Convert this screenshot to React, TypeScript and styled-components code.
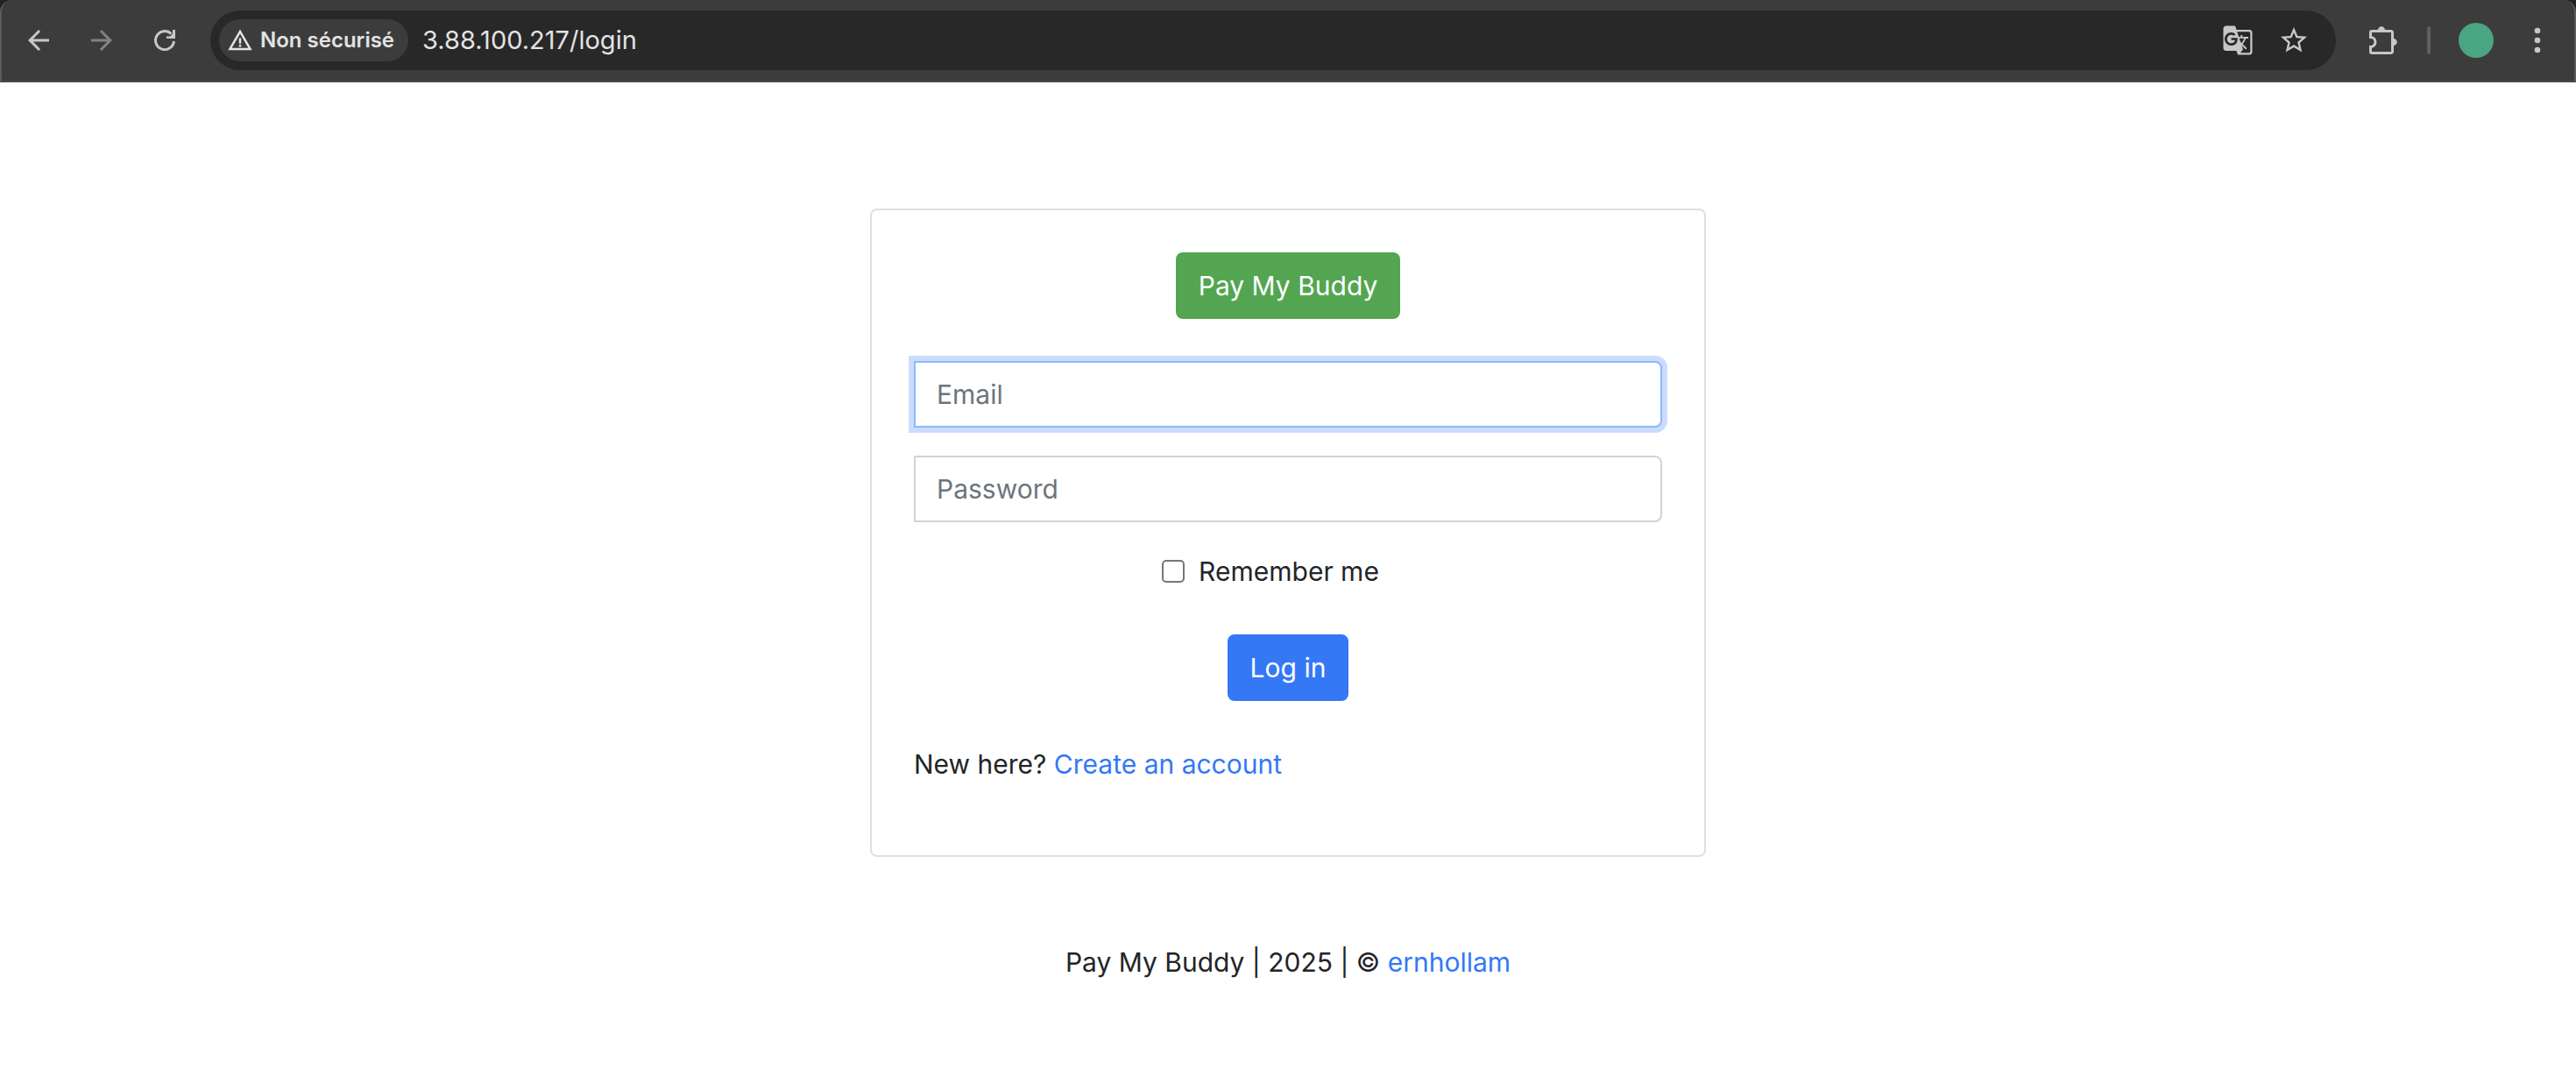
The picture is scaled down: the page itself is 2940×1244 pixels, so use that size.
import React, { useState } from "react";
import styled, { createGlobalStyle } from "styled-components";
import { MdArrowBack, MdArrowForward, MdGTranslate, MdStarBorder, MdWarningAmber } from "react-icons/md";

const GlobalStyle = createGlobalStyle`
  *, *::before, *::after { box-sizing: border-box; }
  body {
    margin: 0;
    background: #fff;
    color: #212529;
    font-family: Inter, "Liberation Sans", sans-serif;
    font-size: 30px;
    line-height: 48px;
  }
  button, input { font: inherit; }
`;

const BarFrame = styled.header`
  background: #222;
`;

const Toolbar = styled.div`
  display: flex;
  align-items: center;
  height: 94px;
  padding: 0 24px;
  background: #3c3c3c;
  border: 2px solid #5c5c5c;
  border-top: 0;
  border-bottom-color: #474747;
  border-radius: 14px 14px 0 0;
`;

const IconButton = styled.button<{ $dim?: boolean }>`
  display: flex;
  align-items: center;
  justify-content: center;
  flex: none;
  width: 36px;
  height: 40px;
  padding: 0;
  border: 0;
  background: none;
  color: ${(p) => (p.$dim ? "#828282" : "#c7c7c7")};
  cursor: pointer;
`;

const NavGroup = styled.nav`
  display: flex;
  gap: 36px;
`;

const AddressBar = styled.div`
  display: flex;
  align-items: center;
  flex: 1;
  height: 68px;
  margin: 0 36px 0 34px;
  padding: 0 30px 0 10px;
  border-radius: 34px;
  background: #282828;
`;

const SecurityChip = styled.button`
  display: flex;
  align-items: center;
  gap: 8px;
  height: 48px;
  padding: 0 16px 0 9px;
  border: 0;
  border-radius: 24px;
  background: #3c3c3c;
  color: #e3e3e3;
  font-size: 24px;
  font-weight: 600;
  white-space: nowrap;
`;

const UrlInput = styled.input`
  flex: 1;
  min-width: 0;
  margin-left: 16px;
  padding: 0;
  border: 0;
  outline: 0;
  background: none;
  color: #e3e3e3;
  font-size: 29px;
`;

const BarActions = styled.div`
  display: flex;
  gap: 28px;
`;

const Tools = styled.div`
  display: flex;
  align-items: center;
  gap: 32px;
`;

const Divider = styled.span`
  width: 4px;
  height: 32px;
  border-radius: 2px;
  background: #5f5f5f;
`;

const Avatar = styled.button`
  width: 40px;
  height: 40px;
  padding: 0;
  border: 0;
  border-radius: 50%;
  background: #4aa582;
`;

const Page = styled.div`
  display: flex;
  flex-direction: column;
  align-items: center;
  gap: 96px;
  padding: 144px 24px 96px;
`;

const Card = styled.main`
  width: 100%;
  max-width: 954px;
  padding: 48px;
  border: 2px solid #dfdfdf;
  border-radius: 8px;
`;

const Form = styled.form`
  display: flex;
  flex-direction: column;
  align-items: center;
  gap: 32px;
`;

const Button = styled.button<{ $color: string }>`
  height: 76px;
  margin: 0;
  padding: 0 26px;
  border: 0;
  border-radius: 8px;
  background: ${(p) => p.$color};
  color: #fff;
  cursor: pointer;
`;

const Brand = styled.div`
  display: flex;
  justify-content: center;
  margin-bottom: 48px;
`;

const Field = styled.input<{ $active: boolean }>`
  width: 100%;
  height: 76px;
  padding: 0 24px;
  border: 2px solid ${(p) => (p.$active ? "#8bb9fb" : "#ced4da")};
  border-radius: 0 8px 8px 0;
  outline: 0;
  background: #fff;
  color: #495057;
  box-shadow: ${(p) => (p.$active ? "0 0 0 6px #cbdcfd" : "none")};

  &::placeholder { color: #6c757d; opacity: 1; }
`;

const Remember = styled.div`
  display: flex;
  align-items: center;
  gap: 16px;
  padding-right: 40px;
`;

const Checkbox = styled.input`
  appearance: none;
  width: 26px;
  height: 26px;
  margin: 0;
  border: 2px solid #767676;
  border-radius: 5px;
  background: #fff;

  &:checked { background: #3478f6; border-color: #3478f6; }
`;

const Submit = styled.div`
  padding: 16px 0;
`;

const SignUp = styled.p`
  margin: 32px 0;
`;

const Link = styled.a`
  color: #3478f6;
  text-decoration: none;
`;

const ReloadIcon = () => (
  <svg width="24" height="24" viewBox="0 0 24 24" fill="none" aria-hidden="true">
    <path d="M22.5 13A10.5 10.5 0 1 1 19.4 4.6" stroke="currentColor" strokeWidth="3" />
    <path d="M24 0v10H14V7.4h4L21 4.4V0z" fill="currentColor" />
  </svg>
);

const PuzzleIcon = () => (
  <svg width="32" height="32" viewBox="0 0 32 32" aria-hidden="true">
    <path
      d="M3 5.5H25a1.5 1.5 0 0 1 1.5 1.5V29a1.5 1.5 0 0 1-1.5 1.5H3A1.5 1.5 0 0 1 1.5 29V23.5a5.5 5.5 0 0 0 0-11V7A1.5 1.5 0 0 1 3 5.5z"
      fill="none"
      stroke="currentColor"
      strokeWidth="3"
    />
    <path d="M10 5a4 4.5 0 0 1 8 0zM27 14a4.5 4 0 0 1 0 8z" fill="currentColor" stroke="currentColor" strokeWidth="0.5" />
  </svg>
);

const DotsIcon = () => (
  <svg width="8" height="32" viewBox="0 0 8 32" fill="currentColor" aria-hidden="true">
    <circle cx="4" cy="5" r="3.3" />
    <circle cx="4" cy="16" r="3.3" />
    <circle cx="4" cy="27" r="3.3" />
  </svg>
);

function BrowserBar() {
  return (
    <BarFrame>
      <Toolbar>
        <NavGroup aria-label="Navigation">
          <IconButton aria-label="Back"><MdArrowBack size={36} /></IconButton>
          <IconButton aria-label="Forward" $dim><MdArrowForward size={36} /></IconButton>
          <IconButton aria-label="Reload"><ReloadIcon /></IconButton>
        </NavGroup>
        <AddressBar>
          <SecurityChip>
            <MdWarningAmber size={30} />
            Non sécurisé
          </SecurityChip>
          <UrlInput aria-label="Address" defaultValue="3.88.100.217/login" />
          <BarActions>
            <IconButton aria-label="Translate"><MdGTranslate size={36} /></IconButton>
            <IconButton aria-label="Bookmark"><MdStarBorder size={38} /></IconButton>
          </BarActions>
        </AddressBar>
        <Tools>
          <IconButton aria-label="Extensions"><PuzzleIcon /></IconButton>
          <Divider />
          <Avatar aria-label="Profile" />
          <IconButton aria-label="Menu"><DotsIcon /></IconButton>
        </Tools>
      </Toolbar>
    </BarFrame>
  );
}

export default function App() {
  const [active, setActive] = useState("email");
  const fields = [
    { id: "email", label: "Email", type: "email" },
    { id: "password", label: "Password", type: "password" },
  ];

  return (
    <>
      <GlobalStyle />
      <BrowserBar />
      <Page>
        <Card>
          <Brand>
            <Button type="button" $color="#53a551">Pay My Buddy</Button>
          </Brand>
          <Form onSubmit={(e) => e.preventDefault()}>
            {fields.map((f) => (
              <Field
                key={f.id}
                id={f.id}
                type={f.type}
                aria-label={f.label}
                placeholder={f.label}
                $active={active === f.id}
                onFocus={() => setActive(f.id)}
                onBlur={() => setActive("")}
              />
            ))}
            <Remember>
              <Checkbox type="checkbox" id="remember" />
              <label htmlFor="remember">Remember me</label>
            </Remember>
            <Submit>
              <Button type="submit" $color="#3478f6">Log in</Button>
            </Submit>
          </Form>
          <SignUp>
            New here? <Link href="#register">Create an account</Link>
          </SignUp>
        </Card>
        <footer>
          Pay My Buddy | 2025 | © <Link href="#ernhollam">ernhollam</Link>
        </footer>
      </Page>
    </>
  );
}
